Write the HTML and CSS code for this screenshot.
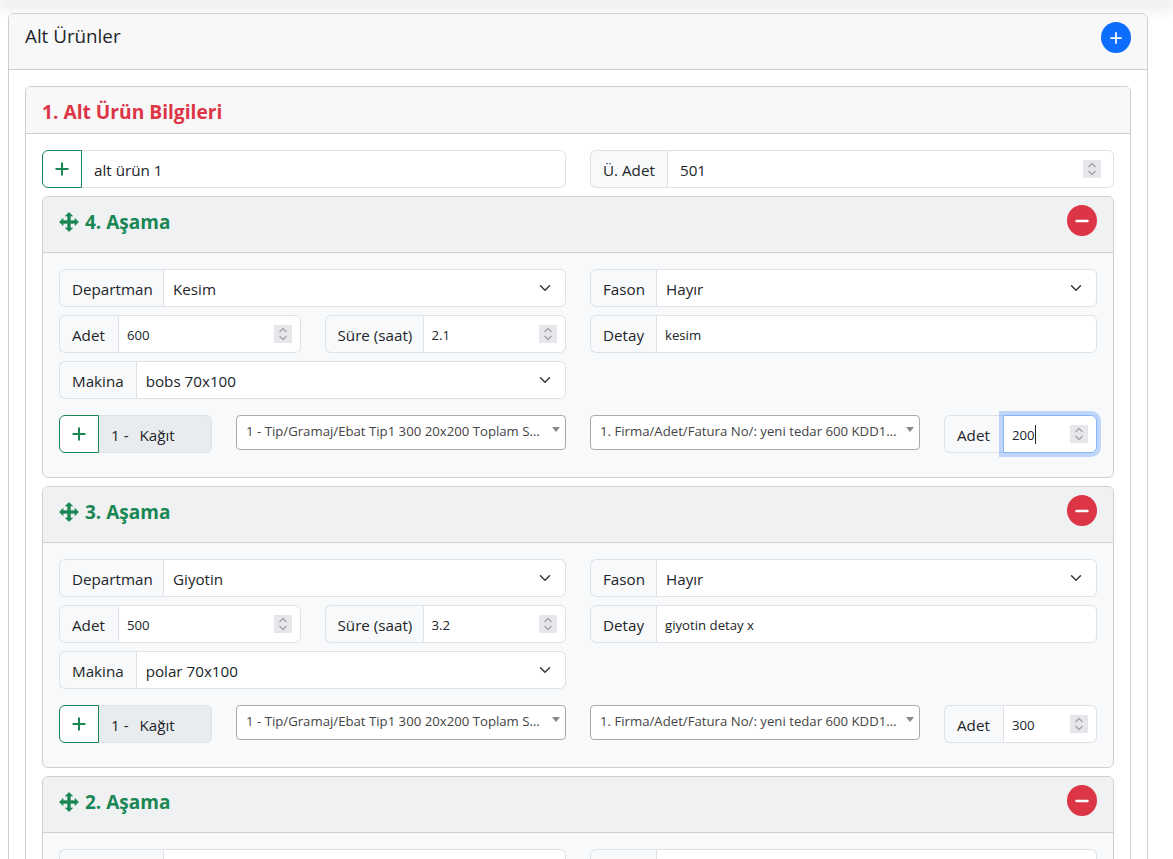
FILE: index.html
```html
<!DOCTYPE html>
<html lang="tr">
<head>
<meta charset="utf-8">
<title>Alt Ürünler</title>
<link rel="stylesheet" href="styles.css">
</head>
<body>
<svg class="sprite" width="0" height="0" aria-hidden="true">
  <symbol id="move" viewBox="0 0 20 20"><path d="M10 .5L13.600 4H11.300V8.700H16V6.400L19.500 10 16 13.600V11.300H11.300V16H13.600L10 19.500 6.400 16H8.700V11.300H4V13.600L.5 10 4 6.400V8.700H8.700V4H6.400z"/></symbol>
  <symbol id="spin" viewBox="0 0 18 18"><rect width="18" height="18" fill="#e6e6eb"/><path d="M5.500 7L9 3.500 12.500 7M5.500 11L9 14.500 12.500 11" fill="none" stroke="#a3a3ab" stroke-width="1.300"/></symbol>
  <symbol id="chev" viewBox="0 0 16 16"><path d="M2 5l6 6 6-6" fill="none" stroke="#343a40" stroke-width="2" stroke-linecap="round" stroke-linejoin="round"/></symbol>
  <symbol id="plus" viewBox="0 0 16 16"><path d="M8 1.500v13M1.500 8h13" fill="none" stroke="currentColor" stroke-width="2"/></symbol>
  <symbol id="minus" viewBox="0 0 16 16"><path d="M2.500 8h11" fill="none" stroke="currentColor" stroke-width="2.400" stroke-linecap="round"/></symbol>
</svg>
<div class="topshadow"></div>
<main class="page">
  <section class="card outer">
    <header class="card-head outer-head">
      <h5 class="outer-title">Alt Ürünler</h5>
      <button class="circle blue" type="button" aria-label="Ekle"><svg width="14" height="14"><use href="#plus"/></svg></button>
    </header>
    <div class="outer-body">
      <section class="card">
        <header class="card-head item-head"><h5 class="item-title">1. Alt Ürün Bilgileri</h5></header>
        <div class="item-body">
          <div class="row">
            <div class="group">
              <button class="addon-btn" type="button" aria-label="Ekle"><svg width="16" height="16"><use href="#plus"/></svg></button>
              <input class="control attached" value="alt ürün 1">
            </div>
            <div class="group">
              <span class="label w-uadet">Ü. Adet</span>
              <div class="control num"><input class="bare" value="501"><svg class="spin" width="18" height="18"><use href="#spin"/></svg></div>
            </div>
          </div>

          <article class="card stage">
            <header class="card-head stage-head">
              <h5 class="stage-title"><svg class="move" width="20" height="20"><use href="#move"/></svg>4. Aşama</h5>
              <button class="circle red" type="button" aria-label="Sil"><svg width="16" height="16"><use href="#minus"/></svg></button>
            </header>
            <div class="stage-body">
              <div class="row">
                <div class="group"><span class="label w-dep">Departman</span><div class="control sel"><span class="val">Kesim</span><svg width="12" height="12"><use href="#chev"/></svg></div></div>
                <div class="group"><span class="label w-fason">Fason</span><div class="control sel"><span class="val">Hayır</span><svg width="12" height="12"><use href="#chev"/></svg></div></div>
              </div>
              <div class="row">
                <div class="row half">
                  <div class="group"><span class="label w-adet">Adet</span><div class="control num sm"><input class="bare" value="600"><svg class="spin" width="18" height="18"><use href="#spin"/></svg></div></div>
                  <div class="group"><span class="label w-sure">Süre (saat)</span><div class="control num sm"><input class="bare" value="2.1"><svg class="spin" width="18" height="18"><use href="#spin"/></svg></div></div>
                </div>
                <div class="group"><span class="label w-fason">Detay</span><div class="control num sm"><input class="bare" value="kesim"></div></div>
              </div>
              <div class="row">
                <div class="group"><span class="label">Makina</span><div class="control sel"><span class="val">bobs 70x100</span><svg width="12" height="12"><use href="#chev"/></svg></div></div>
                <div></div>
              </div>
              <div class="stock">
                <div class="group"><button class="addon-btn" type="button" aria-label="Ekle"><svg width="16" height="16"><use href="#plus"/></svg></button><span class="label fill">1 -&nbsp;<span class="kind">Kağıt</span></span></div>
                <div class="select2"><span class="s2-text">1 - Tip/Gramaj/Ebat Tip1 300 20x200 Toplam Stok: 600 Kalan: 200</span><i class="s2-arrow"></i></div>
                <div class="select2"><span class="s2-text">1. Firma/Adet/Fatura No/: yeni tedar 600 KDD12345 Toplam</span><i class="s2-arrow"></i></div>
                <div class="group"><span class="label w-adet">Adet</span><div class="control num sm focus"><span class="typed">200</span><i class="caret"></i><svg class="spin" width="18" height="18"><use href="#spin"/></svg></div></div>
              </div>
            </div>
          </article>

          <article class="card stage">
            <header class="card-head stage-head">
              <h5 class="stage-title"><svg class="move" width="20" height="20"><use href="#move"/></svg>3. Aşama</h5>
              <button class="circle red" type="button" aria-label="Sil"><svg width="16" height="16"><use href="#minus"/></svg></button>
            </header>
            <div class="stage-body">
              <div class="row">
                <div class="group"><span class="label w-dep">Departman</span><div class="control sel"><span class="val">Giyotin</span><svg width="12" height="12"><use href="#chev"/></svg></div></div>
                <div class="group"><span class="label w-fason">Fason</span><div class="control sel"><span class="val">Hayır</span><svg width="12" height="12"><use href="#chev"/></svg></div></div>
              </div>
              <div class="row">
                <div class="row half">
                  <div class="group"><span class="label w-adet">Adet</span><div class="control num sm"><input class="bare" value="500"><svg class="spin" width="18" height="18"><use href="#spin"/></svg></div></div>
                  <div class="group"><span class="label w-sure">Süre (saat)</span><div class="control num sm"><input class="bare" value="3.2"><svg class="spin" width="18" height="18"><use href="#spin"/></svg></div></div>
                </div>
                <div class="group"><span class="label w-fason">Detay</span><div class="control num sm"><input class="bare" value="giyotin detay x"></div></div>
              </div>
              <div class="row">
                <div class="group"><span class="label">Makina</span><div class="control sel"><span class="val">polar 70x100</span><svg width="12" height="12"><use href="#chev"/></svg></div></div>
                <div></div>
              </div>
              <div class="stock">
                <div class="group"><button class="addon-btn" type="button" aria-label="Ekle"><svg width="16" height="16"><use href="#plus"/></svg></button><span class="label fill">1 -&nbsp;<span class="kind">Kağıt</span></span></div>
                <div class="select2"><span class="s2-text">1 - Tip/Gramaj/Ebat Tip1 300 20x200 Toplam Stok: 600 Kalan: 200</span><i class="s2-arrow"></i></div>
                <div class="select2"><span class="s2-text">1. Firma/Adet/Fatura No/: yeni tedar 600 KDD12345 Toplam</span><i class="s2-arrow"></i></div>
                <div class="group"><span class="label w-adet">Adet</span><div class="control num sm"><input class="bare" value="300"><svg class="spin" width="18" height="18"><use href="#spin"/></svg></div></div>
              </div>
            </div>
          </article>

          <article class="card stage">
            <header class="card-head stage-head">
              <h5 class="stage-title"><svg class="move" width="20" height="20"><use href="#move"/></svg>2. Aşama</h5>
              <button class="circle red" type="button" aria-label="Sil"><svg width="16" height="16"><use href="#minus"/></svg></button>
            </header>
            <div class="stage-body">
              <div class="row">
                <div class="group"><span class="label w-dep">Departman</span><div class="control sel"></div></div>
                <div class="group"><span class="label w-fason">Fason</span><div class="control sel"></div></div>
              </div>
            </div>
          </article>
        </div>
      </section>
    </div>
  </section>
</main>
</body>
</html>
```
FILE: styles.css
```css
* { box-sizing: border-box; }
html, body { height: 100%; overflow: hidden; }
body {
  margin: 0;
  background: #fff;
  color: #212529;
  font-family: "Open Sans", "Noto Sans", sans-serif;
  font-size: 15.2px;
  line-height: 24px;
}
.sprite { display: block; }
.topshadow { height: 0; box-shadow: 0 2px 16px 4px rgba(0, 0, 0, .14); }
.page { padding: 13px 25px 0 8px; }
.card {
  border: 1px solid #cfcfcf;
  border-radius: 6px;
  background: #fff;
}
.card-head {
  display: flex;
  align-items: flex-start;
  justify-content: space-between;
  background: #f8f8f8;
  border-bottom: 1px solid #cfcfcf;
  border-radius: 5px 5px 0 0;
}
.outer-head { height: 56px; padding: 8px 16px 0; }
.outer-title { margin: 2px 0 0; font-size: 18.800px; font-weight: 400; line-height: 24px; }
.outer-body { padding: 16px; }
.circle {
  display: flex;
  align-items: center;
  justify-content: center;
  width: 30px;
  height: 31px;
  padding: 0;
  border: 0;
  border-radius: 50%;
  color: #fff;
}
.blue { background: #0d6efd; }
.red { background: #dc3545; }
.item-head { height: 47px; padding: 13px 16px 0; }
.item-title { margin: 0; font-size: 19.200px; font-weight: 700; line-height: 24px; color: #dc3545; }
.item-body { padding: 16px 16px 0; }
.row { display: grid; grid-template-columns: 1fr 1fr; column-gap: 24px; margin-bottom: 8px; }
.row.half { margin-bottom: 0; }
.group { display: flex; height: 38px; min-width: 0; }
.label {
  display: flex;
  align-items: center;
  flex: none;
  padding: 2px 12px 0;
  white-space: nowrap;
  background: #f8f9fa;
  border: 1px solid #dee2e6;
  border-right: 0;
  border-radius: 6px 0 0 6px;
}
.w-uadet { width: 77px; }
.w-dep { width: 104px; }
.w-fason { width: 66px; }
.w-adet { width: 59px; }
.w-sure { width: 98px; }
.label.fill { flex: 1; background: #e9ecef; border-left: 0; border-radius: 0 6px 6px 0; border-right: 1px solid #dee2e6; }
.kind { margin-left: 7px; }
.addon-btn {
  display: flex;
  align-items: center;
  justify-content: center;
  flex: none;
  width: 40px;
  height: 38px;
  padding: 0;
  color: #198754;
  background: #fff;
  border: 1px solid #198754;
  border-radius: 6px 0 0 6px;
}
.control {
  flex: 1;
  min-width: 0;
  height: 38px;
  background: #fff;
  border: 1px solid #dee2e6;
  border-radius: 0 6px 6px 0;
  font: inherit;
  color: #212529;
}
input.control { padding: 2px 12px 0; outline: 0; }
input.attached { border-left: 0; }
.num { display: flex; align-items: center; padding: 0 12px; }
.num .spin { flex: none; }
.bare {
  flex: 1;
  width: 100%;
  min-width: 0;
  padding: 2px 0 0;
  border: 0;
  outline: 0;
  background: transparent;
  font: inherit;
  color: #212529;
}
.sm { padding: 0 12px 0 8px; font-size: 13.200px; }
.sm .spin { margin-right: -4px; }
.sel {
  display: flex;
  align-items: center;
  justify-content: space-between;
  padding: 0 14px 0 9px;
}
.val { padding-top: 2px; }
.stage { margin-top: 8px; background: #f8f9fa; }
.stage-head { height: 56px; padding: 8px 16px 0; background: #f0f1f3; }
.stage-title {
  display: flex;
  align-items: center;
  margin: 5px 0 0;
  font-size: 19px;
  font-weight: 700;
  line-height: 24px;
  color: #198754;
}
.move { margin-right: 6px; fill: #198754; stroke: #198754; stroke-width: .7; stroke-linejoin: round; }
.stage-body { padding: 16px; }
.stock {
  display: grid;
  grid-template-columns: 153px 330px 330px 153px;
  column-gap: 24px;
  margin-top: 16px;
  margin-bottom: 8px;
  align-items: start;
}
.select2 {
  display: flex;
  align-items: center;
  height: 35px;
  padding: 0 5px 3px 9px;
  background: #fff;
  border: 1px solid #aaa;
  border-radius: 4px;
  font-size: 13.200px;
  color: #444;
}
.s2-text { flex: 1; min-width: 0; overflow: hidden; white-space: nowrap; text-overflow: ellipsis; }
.s2-arrow {
  flex: none;
  margin: 0 0 3px 8px;
  border-style: solid;
  border-width: 5px 4px 0 4px;
  border-color: #888 transparent transparent transparent;
}
.focus {
  position: relative;
  border: 1px solid #86b7fe;
  box-shadow: 0 0 0 4px rgba(13, 110, 253, .25);
}
.typed { padding-top: 2px; }
.caret { width: 1px; height: 19px; margin-right: auto; background: #212529; }
```
